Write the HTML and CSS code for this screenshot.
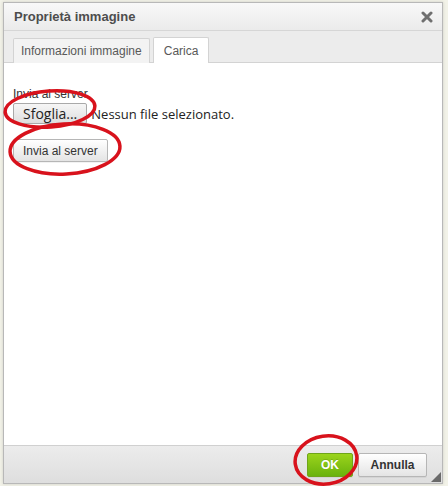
FILE: index.html
```html
<!DOCTYPE html>
<html lang="it">
<head>
    <meta charset="UTF-8">
    <meta name="viewport" content="width=device-width, initial-scale=1.0">
    <title>Proprietà immagine</title>
    <link rel="stylesheet" href="styles.css">
</head>
<body>
    <div class="dialog">
        <!-- barra del titolo -->
        <div class="dialog-title">
            <span class="title-text">Proprietà immagine</span>
            <svg class="close" width="12" height="12" viewBox="0 0 12 12">
                <path d="M2 2 L10 10 M10 2 L2 10" stroke="#6f6f6f" stroke-width="3" stroke-linecap="round"/>
            </svg>
        </div>
        <!-- schede -->
        <div class="tabs">
            <div class="tab">Informazioni immagine</div>
            <div class="tab tab-active">Carica</div>
        </div>
        <!-- contenuto -->
        <div class="dialog-body">
            <div class="label">Invia al server</div>
            <div class="file-row">
                <button type="button" class="file-btn">Sfoglia...</button>
                <span class="file-name">Nessun file selezionato.</span>
            </div>
            <button type="button" class="btn">Invia al server</button>
        </div>
        <!-- piè di pagina -->
        <div class="dialog-footer">
            <button type="button" class="btn btn-footer btn-ok">OK</button>
            <button type="button" class="btn btn-footer btn-cancel">Annulla</button>
            <svg class="grip" width="10" height="10" viewBox="0 0 10 10">
                <path d="M10 0 L10 10 L0 10 Z" fill="#6a6a6a"/>
            </svg>
        </div>
    </div>
    <!-- cerchi rossi disegnati sopra lo screenshot -->
    <svg class="marks" width="448" height="486" viewBox="0 0 448 486">
        <g fill="none" stroke="#d8121c" stroke-width="3.5">
            <ellipse cx="50" cy="109" rx="45" ry="18" transform="rotate(-4 50 109)"/>
            <ellipse cx="65" cy="149" rx="55" ry="25" transform="rotate(-3 65 149)"/>
            <ellipse cx="326" cy="460" rx="31" ry="24" transform="rotate(-8 326 460)"/>
        </g>
    </svg>
</body>
</html>
```
FILE: styles.css
```css
* {
    box-sizing: border-box;
}
body {
    margin: 0;
    width: 448px;
    height: 486px;
    background: #f2f2e8;
    font-family: "Liberation Sans", Arial, sans-serif;
    font-size: 12px;
    color: #333;
    padding: 2px 5px 2px 3px;
    position: relative;
}
.dialog {
    height: 482px;
    border: 1px solid #b8b8b8;
    box-shadow: 0 0 3px rgba(0, 0, 0, 0.15);
    display: flex;
    flex-direction: column;
    background: #fff;
}
.dialog-title {
    height: 28px;
    display: flex;
    align-items: center;
    justify-content: space-between;
    padding: 0 9px 0 10px;
    background: linear-gradient(#f8f8f8, #ebebeb);
    border-bottom: 1px solid #d6d6d6;
}
.title-text {
    font-weight: bold;
    font-size: 13px;
    color: #4d4d4d;
}
.tabs {
    height: 32px;
    display: flex;
    align-items: flex-end;
    gap: 3px;
    padding: 0 9px;
    background: #ececec;
    border-bottom: 1px solid #d3d3d3;
}
.tab {
    height: 25px;
    padding: 0 7px;
    display: flex;
    align-items: center;
    color: #595959;
    font-size: 12px;
    background: #f3f3f3;
    border: 1px solid #d3d3d3;
    border-bottom: none;
    border-radius: 2px 2px 0 0;
    margin-bottom: -1px;
}
.tab-active {
    background: #fff;
    height: 26px;
    padding: 0 10px;
}
.dialog-body {
    flex: 1;
    padding: 23px 9px 0;
    display: flex;
    flex-direction: column;
    align-items: flex-start;
}
.label {
    color: #333;
    line-height: 16px;
}
.file-row {
    display: flex;
    align-items: center;
    gap: 4px;
    margin-top: 1px;
}
.file-btn {
    height: 21px;
    padding: 0 9px;
    font-family: "Open Sans", sans-serif;
    font-size: 14px;
    line-height: 18px;
    color: #222;
    background: linear-gradient(#f6f6f6, #dedede);
    border: 1px solid #a9a9a9;
    border-radius: 2px;
}
.file-name {
    font-family: "Open Sans", sans-serif;
    font-size: 13px;
    color: #222;
}
.btn {
    height: 23px;
    margin-top: 15px;
    padding: 0 9px;
    font-family: "Liberation Sans", Arial, sans-serif;
    font-size: 12px;
    color: #333;
    background: linear-gradient(#fff, #e4e4e4);
    border: 1px solid #b6b6b6;
    border-radius: 2px;
    box-shadow: 0 1px 0 rgba(0, 0, 0, 0.05);
}
.dialog-footer {
    height: 38px;
    display: flex;
    align-items: center;
    justify-content: flex-end;
    gap: 5px;
    padding: 0 15px 0 0;
    background: linear-gradient(#ececec, #dedede);
    border-top: 1px solid #d0d0d0;
    position: relative;
}
.btn-footer {
    margin-top: 0;
    height: 24px;
    font-weight: bold;
}
.btn-ok {
    width: 46px;
    color: #fff;
    background: linear-gradient(#9bd41c, #6ab20d);
    border-color: #6fa51a;
    text-shadow: 0 -1px 0 rgba(0, 0, 0, 0.15);
}
.btn-cancel {
    width: 69px;
    color: #333;
}
.grip {
    position: absolute;
    right: 1px;
    bottom: 1px;
}
.marks {
    position: absolute;
    left: 0;
    top: 0;
    pointer-events: none;
}
```
